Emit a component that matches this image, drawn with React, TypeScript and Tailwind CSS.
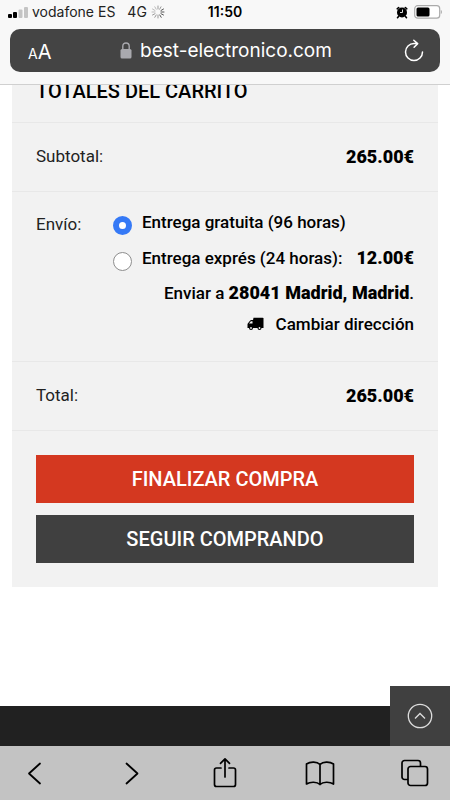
import { useState } from "react";

function StatusBar() {
  return (
    <div className="grid h-7 grid-cols-[1fr_auto_1fr] items-center px-2 pb-1 font-['Inter','Liberation_Sans',sans-serif] text-sm leading-4 text-[#222]">
      <div className="flex items-center whitespace-nowrap">
        <svg width="20" height="13" viewBox="0 0 20 13" aria-hidden="true" className="mr-1">
          <rect x="0" y="8" width="4" height="4" rx="1" fill="#000" />
          <rect x="5" y="6" width="4" height="6" rx="1" fill="#000" />
          <rect x="10.5" y="3.5" width="4" height="8.500" rx="1" fill="#c4c4c4" />
          <rect x="16" y="1" width="4" height="11" rx="1" fill="#c4c4c4" />
        </svg>
        <span>vodafone ES</span>
        <span className="ml-3">4G</span>
        <svg width="14" height="14" viewBox="0 0 14 14" aria-hidden="true" className="ml-1" strokeLinecap="round" strokeWidth="1">
          <path d="M7 1v3M10 1.800 8.700 4.200" stroke="#999" />
          <path d="M12.500 4 10 5.500M13 7h-3M12.500 10 10 8.700M10.200 12.300 8.800 10" stroke="#555" />
          <path d="M7 13v-3M3.800 12.300 5.200 10M1.500 10 4 8.700" stroke="#999" />
          <path d="M1 7h3M1.500 4 4 5.500M3.800 1.800 5.200 4.200" stroke="#bbb" />
        </svg>
      </div>
      <time className="font-semibold text-black">11:50</time>
      <div className="flex items-center justify-end">
        <svg width="12" height="13" viewBox="0 0 12 13" aria-hidden="true" className="mr-1.5">
          <circle cx="6" cy="6.500" r="5" />
          <path d="M1.200 2.800 2.700 1.500M10.800 2.800 9.300 1.500M2.500 10.500 1.500 11.700M9.500 10.500l1 1.200" stroke="#000" strokeWidth="1.600" strokeLinecap="round" />
          <path d="M6.500 3.500v3H4" fill="none" stroke="#ddd" strokeWidth="1" />
        </svg>
        <svg width="28" height="14" viewBox="0 0 28 14" aria-hidden="true">
          <rect x=".7" y=".7" width="25" height="12.500" rx="3" fill="#fff" stroke="#aaa" strokeWidth="1.200" />
          <rect x="2.500" y="2.500" width="13" height="9" rx="1.500" />
          <path d="M26.800 5v4c.8-.4 1.100-1 1.100-2s-.3-1.600-1.100-2Z" fill="#aaa" />
        </svg>
      </div>
    </div>
  );
}

function AddressBar() {
  return (
    <div className="mx-2.5 mt-px flex h-[43px] items-center justify-between rounded-[10px] bg-[#444] pr-4 pl-[18px] font-['Inter','Liberation_Sans',sans-serif] text-white">
      <button type="button" aria-label="Ajustes de texto" className="flex w-8 items-baseline pt-1">
        <span className="text-sm leading-6">A</span>
        <span className="text-xl leading-6">A</span>
      </button>
      <div className="flex items-center gap-2 text-[19px] leading-6">
        <svg width="12" height="17" viewBox="0 0 12 17" aria-hidden="true">
          <rect x=".5" y="7" width="11" height="9.500" rx="1.500" fill="#a9a9ae" />
          <path d="M2.800 8V4.300C2.800 2.200 4.100 1 6 1s3.200 1.200 3.200 3.300V8" fill="none" stroke="#a9a9ae" strokeWidth="1.400" />
        </svg>
        <span>best-electronico.com</span>
      </div>
      <button type="button" aria-label="Recargar" className="flex w-8 justify-end">
        <svg width="22" height="24" viewBox="0 0 22 24" fill="none" stroke="#fff" strokeWidth="1.500" strokeLinecap="round" strokeLinejoin="round" aria-hidden="true">
          <path d="M20.500 13A8.500 8.500 0 1 1 12 4.500h3.500M11.800 1.300l3.900 3.300-3.600 3.600" />
        </svg>
      </button>
    </div>
  );
}

function AmountRow({ label, amount }: { label: string; amount: string }) {
  return (
    <div className="flex h-[69px] items-center justify-between border-b border-[#e8e8e8] px-6">
      <dt>{label}</dt>
      <dd className="text-lg font-black text-black">{amount}</dd>
    </div>
  );
}

const radioClass =
  "mt-1.5 size-[19px] shrink-0 appearance-none rounded-full border-[1.5px] border-[#8e8e8e] bg-white checked:border-[6px] checked:border-[#3579f6]";

function Shipping() {
  const [method, setMethod] = useState("free");
  return (
    <div className="flex border-b border-[#e8e8e8] px-6 pt-[18px] pb-[25px]">
      <dt className="w-[77px] pt-0.5 leading-6">Envío:</dt>
      <dd className="flex-1 font-medium text-black">
        <div className="flex h-6 gap-2.5">
          <input id="free" type="radio" name="shipping" checked={method === "free"} onChange={() => setMethod("free")} className={radioClass} />
          <label htmlFor="free" className="leading-6">Entrega gratuita (96 horas)</label>
        </div>
        <div className="mt-3 flex h-6 gap-2.5">
          <input id="express" type="radio" name="shipping" checked={method === "express"} onChange={() => setMethod("express")} className={radioClass} />
          <label htmlFor="express" className="flex flex-1 items-baseline justify-between leading-6">
            <span>Entrega exprés (24 horas):</span> <strong className="text-lg leading-6 font-black">12.00€</strong>
          </label>
        </div>
        <p className="mt-[11px] text-right leading-6">
          Enviar a <strong className="text-lg leading-6 font-black">28041 Madrid, Madrid</strong>.
        </p>
        <a href="#direccion" className="mt-[7px] flex items-center justify-end gap-3 leading-6">
          <svg width="17" height="14" viewBox="0 0 17 14" aria-hidden="true">
            <path d="M6.500 .8h9.200q.8 0 .8.800V11H6V3Z" />
            <path d="M7 3H4.200q-.6 0-1 .5L1 6.300Q.5 6.800.5 7.500V11H7Z" />
            <path d="M2 6.500 3.900 4.300H5.500v2.200Z" fill="#f2f2f2" />
            <circle cx="4" cy="11" r="2" />
            <circle cx="4" cy="11" r=".9" fill="#f2f2f2" />
            <circle cx="12.500" cy="11" r="2" />
            <circle cx="12.500" cy="11" r=".9" fill="#f2f2f2" />
          </svg>
          Cambiar dirección
        </a>
      </dd>
    </div>
  );
}

function Toolbar() {
  const button = "flex w-10 justify-center";
  return (
    <nav aria-label="Navegador" className="flex h-[54px] items-center justify-between bg-[#c3c3c3] px-[15px] text-black">
      <button type="button" aria-label="Atrás" className={button}>
        <svg width="28" height="28" viewBox="0 0 28 28" fill="none" stroke="currentColor" strokeWidth="1.800" strokeLinecap="round" strokeLinejoin="round">
          <path d="M19 4.500 8 14.500l11 10" />
        </svg>
      </button>
      <button type="button" aria-label="Adelante" className={button}>
        <svg width="28" height="28" viewBox="0 0 28 28" fill="none" stroke="currentColor" strokeWidth="1.800" strokeLinecap="round" strokeLinejoin="round">
          <path d="m10.500 4.500 11 10-11 10" />
        </svg>
      </button>
      <button type="button" aria-label="Compartir" className={button}>
        <svg width="28" height="32" viewBox="0 0 28 32" fill="none" stroke="currentColor" strokeWidth="1.700" strokeLinecap="round" strokeLinejoin="round">
          <path d="M10 11H5.500A2 2 0 0 0 3.500 13v14.500a2 2 0 0 0 2 2h17a2 2 0 0 0 2-2V13a2 2 0 0 0-2-2H18M14 20V2M9.500 6.300 14 1.800l4.500 4.500" />
        </svg>
      </button>
      <button type="button" aria-label="Marcadores" className={button}>
        <svg width="30" height="28" viewBox="0 0 30 28" fill="none" stroke="currentColor" strokeWidth="1.700" strokeLinecap="round" strokeLinejoin="round">
          <path d="M15 5.500C12 2.500 5.500 2.300 1.500 5v20c4-2.500 10.500-2.300 13.500.5 3-2.800 9.500-3 13.500-.5V5C24.500 2.300 18 2.500 15 5.500Zm0 0v20" />
        </svg>
      </button>
      <button type="button" aria-label="Pestañas" className={button}>
        <svg width="28" height="28" viewBox="0 0 28 28" fill="none" stroke="currentColor" strokeWidth="1.700" strokeLinejoin="round">
          <path d="M7 20.500H3.500A2.500 2.500 0 0 1 1 18V4a2.500 2.500 0 0 1 2.500-2.500H17A2.500 2.500 0 0 1 19.500 4v3.500" />
          <rect x="7" y="7.500" width="19.500" height="19" rx="2.500" />
        </svg>
      </button>
    </nav>
  );
}

export default function App() {
  return (
    <div className="flex min-h-screen flex-col bg-white font-['Roboto','Liberation_Sans',sans-serif] text-[17px] text-[#222]">
      <header className="border-b border-[#d0d0d0] bg-[#f8f8f8] pb-3">
        <StatusBar />
        <AddressBar />
      </header>
      <main className="flex-1 px-3">
        <section className="overflow-hidden bg-[#f2f2f2]">
          <div className="border-b border-[#e8e8e8] px-6 pb-[19px]">
            <h1 className="-mt-1.5 text-xl leading-6 font-medium text-black">TOTALES DEL CARRITO</h1>
          </div>
          <dl>
            <AmountRow label="Subtotal:" amount="265.00€" />
            <Shipping />
            <AmountRow label="Total:" amount="265.00€" />
          </dl>
          <div className="flex flex-col gap-3 p-6 text-xl font-medium text-white">
            <button type="button" className="h-12 bg-[#d43820] pb-px">FINALIZAR COMPRA</button>
            <button type="button" className="h-12 bg-[#404040] pb-px">SEGUIR COMPRANDO</button>
          </div>
        </section>
      </main>
      <footer className="relative h-10 bg-[#212121]">
        <button type="button" aria-label="Volver arriba" className="absolute right-0 bottom-0 flex size-[60px] items-center justify-center bg-[#404040]">
          <svg width="26" height="26" viewBox="0 0 26 26" fill="none" stroke="#ddd" strokeWidth="1.300" aria-hidden="true">
            <circle cx="13" cy="13" r="11.700" />
            <path d="m8 15.500 5-5 5 5" />
          </svg>
        </button>
      </footer>
      <Toolbar />
    </div>
  );
}
